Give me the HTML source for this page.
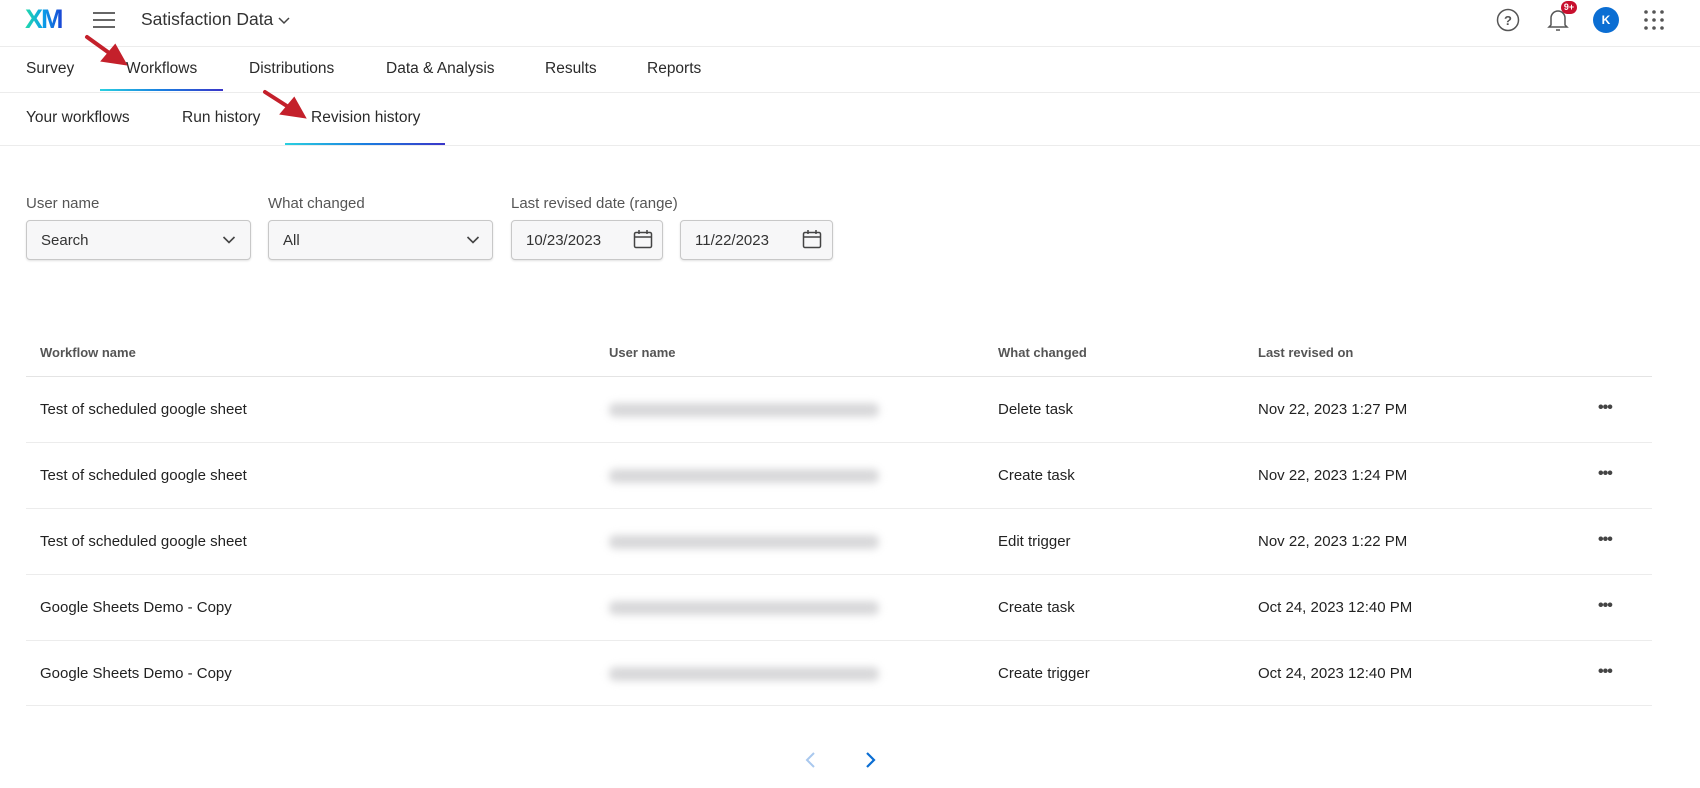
<!DOCTYPE html>
<html><head><style>
*{margin:0;padding:0;box-sizing:border-box}
body{width:1700px;height:788px;overflow:hidden;background:#fff;font-family:"Liberation Sans",sans-serif;color:#1d1d1f;position:relative}
.a{position:absolute;white-space:nowrap}
.hl{position:absolute;left:0;width:1700px;height:1px;background:#ececec}
.tab{position:absolute;font-size:15.5px;color:#2a2a2a;top:60px}
.sub{position:absolute;font-size:15.5px;color:#2a2a2a;top:109px}
.lbl{position:absolute;top:195px;font-size:15px;color:#555}
.box{position:absolute;top:220px;height:40px;border:1px solid #c8c8c8;border-radius:4px;background:#f7f7f8;box-shadow:0 1px 2px rgba(0,0,0,.12);font-size:15px;color:#333;padding:11px 14px}
.th{position:absolute;top:345px;font-size:13px;font-weight:bold;color:#555}
.td{position:absolute;font-size:15px;color:#222}
.blur{position:absolute;left:609px;width:270px;height:14px;background:#d8d8da;filter:blur(4px);border-radius:6px}
.dots{position:absolute;left:1598px;font-size:16px;font-weight:bold;color:#444;letter-spacing:-1px}
</style></head><body>
<!-- top bar -->
<div class="a" style="left:25px;top:4px;font-size:27px;font-weight:bold;letter-spacing:-2px;background:linear-gradient(90deg,#21dbaa,#0b9ee8,#1a44d4);-webkit-background-clip:text;color:transparent">XM</div>
<div class="a" style="left:93px;top:12px;width:22px;height:2px;background:#666;box-shadow:0 7px 0 #666,0 14px 0 #666"></div>
<div class="a" style="left:141px;top:9px;font-size:17.5px;color:#333">Satisfaction Data</div>
<svg class="a" style="left:277px;top:15px" width="14" height="10"><path d="M2 3l5 5 5-5" stroke="#444" stroke-width="1.5" fill="none"/></svg>
<svg class="a" style="left:1496px;top:8px" width="24" height="24"><circle cx="12" cy="12" r="10.5" stroke="#555" stroke-width="1.5" fill="none"/><text x="12" y="17" font-size="13" font-family="Liberation Sans" text-anchor="middle" fill="#555" font-weight="bold">?</text></svg>
<svg class="a" style="left:1545px;top:6px" width="26" height="26"><path d="M6 19V12a7 7 0 0 1 14 0v7l2 2H4z" stroke="#555" stroke-width="1.5" fill="none"/><path d="M11 24h4" stroke="#555" stroke-width="1.5"/></svg>
<div class="a" style="left:1561px;top:1px;width:16px;height:13px;border-radius:7px;background:#c8102e;color:#fff;font-size:9px;font-weight:bold;text-align:center;line-height:13px">9+</div>
<div class="a" style="left:1593px;top:7px;width:26px;height:26px;border-radius:50%;background:#0b6ed3;color:#fff;font-size:12px;font-weight:bold;text-align:center;line-height:26px">K</div>
<svg class="a" style="left:1643px;top:9px" width="22" height="22" fill="#555"><circle cx="3" cy="3" r="1.8"/><circle cx="11" cy="3" r="1.8"/><circle cx="19" cy="3" r="1.8"/><circle cx="3" cy="11" r="1.8"/><circle cx="11" cy="11" r="1.8"/><circle cx="19" cy="11" r="1.8"/><circle cx="3" cy="19" r="1.8"/><circle cx="11" cy="19" r="1.8"/><circle cx="19" cy="19" r="1.8"/></svg>
<div class="hl" style="top:46px"></div>
<!-- tabs -->
<div class="tab" style="left:26px">Survey</div>
<div class="tab" style="left:126px">Workflows</div>
<div class="tab" style="left:249px">Distributions</div>
<div class="tab" style="left:386px">Data &amp; Analysis</div>
<div class="tab" style="left:545px">Results</div>
<div class="tab" style="left:647px">Reports</div>
<div class="a" style="left:100px;top:89px;width:123px;height:2px;background:linear-gradient(90deg,#2ad0e0,#1a7ee0,#3a35c8)"></div>
<div class="hl" style="top:92px"></div>
<div class="sub" style="left:26px">Your workflows</div>
<div class="sub" style="left:182px">Run history</div>
<div class="sub" style="left:311px">Revision history</div>
<div class="a" style="left:285px;top:143px;width:160px;height:2px;background:linear-gradient(90deg,#2ad0e0,#1a7ee0,#3a35c8)"></div>
<div class="hl" style="top:145px"></div>
<!-- arrows -->
<svg class="a" style="left:0;top:0" width="400" height="130"><g stroke="#c4202b" stroke-width="4" fill="#c4202b" stroke-linecap="round"><path d="M87 37L112 55"/><path d="M124 63L104 60L115 47z"/><path d="M265 92L290 108"/><path d="M303 116L283 113L294 100z"/></g></svg>
<!-- filters -->
<div class="lbl" style="left:26px">User name</div>
<div class="lbl" style="left:268px">What changed</div>
<div class="lbl" style="left:511px">Last revised date (range)</div>
<div class="box" style="left:26px;width:225px">Search</div>
<div class="box" style="left:268px;width:225px">All</div>
<div class="box" style="left:511px;width:152px">10/23/2023</div>
<div class="box" style="left:680px;width:153px">11/22/2023</div>
<svg class="a" style="left:222px;top:235px" width="14" height="10"><path d="M1.5 2l5.5 5.5 5.5-5.5" stroke="#444" stroke-width="1.6" fill="none"/></svg>
<svg class="a" style="left:466px;top:235px" width="14" height="10"><path d="M1.5 2l5.5 5.5 5.5-5.5" stroke="#444" stroke-width="1.6" fill="none"/></svg>
<svg class="a" style="left:633px;top:229px" width="20" height="20"><rect x="1.5" y="3.5" width="17" height="15" rx="1.5" stroke="#444" stroke-width="1.5" fill="none"/><path d="M1.5 8h17M6 1v4M14 1v4" stroke="#444" stroke-width="1.5"/></svg>
<svg class="a" style="left:802px;top:229px" width="20" height="20"><rect x="1.5" y="3.5" width="17" height="15" rx="1.5" stroke="#444" stroke-width="1.5" fill="none"/><path d="M1.5 8h17M6 1v4M14 1v4" stroke="#444" stroke-width="1.5"/></svg>
<!-- table -->
<div class="th" style="left:40px">Workflow name</div>
<div class="th" style="left:609px">User name</div>
<div class="th" style="left:998px">What changed</div>
<div class="th" style="left:1258px">Last revised on</div>
<div class="a" style="left:26px;top:376px;width:1626px;height:1px;background:#e4e4e4"></div>

<div class="td" style="left:40px;top:401px">Test of scheduled google sheet</div><div class="blur" style="top:403px"></div><div class="td" style="left:998px;top:401px">Delete task</div><div class="td" style="left:1258px;top:401px">Nov 22, 2023 1:27 PM</div><div class="dots" style="top:399px">•••</div>
<div class="a" style="left:26px;top:442px;width:1626px;height:1px;background:#ececec"></div>
<div class="td" style="left:40px;top:467px">Test of scheduled google sheet</div><div class="blur" style="top:469px"></div><div class="td" style="left:998px;top:467px">Create task</div><div class="td" style="left:1258px;top:467px">Nov 22, 2023 1:24 PM</div><div class="dots" style="top:465px">•••</div>
<div class="a" style="left:26px;top:508px;width:1626px;height:1px;background:#ececec"></div>
<div class="td" style="left:40px;top:533px">Test of scheduled google sheet</div><div class="blur" style="top:535px"></div><div class="td" style="left:998px;top:533px">Edit trigger</div><div class="td" style="left:1258px;top:533px">Nov 22, 2023 1:22 PM</div><div class="dots" style="top:531px">•••</div>
<div class="a" style="left:26px;top:574px;width:1626px;height:1px;background:#ececec"></div>
<div class="td" style="left:40px;top:599px">Google Sheets Demo - Copy</div><div class="blur" style="top:601px"></div><div class="td" style="left:998px;top:599px">Create task</div><div class="td" style="left:1258px;top:599px">Oct 24, 2023 12:40 PM</div><div class="dots" style="top:597px">•••</div>
<div class="a" style="left:26px;top:640px;width:1626px;height:1px;background:#ececec"></div>
<div class="td" style="left:40px;top:665px">Google Sheets Demo - Copy</div><div class="blur" style="top:667px"></div><div class="td" style="left:998px;top:665px">Create trigger</div><div class="td" style="left:1258px;top:665px">Oct 24, 2023 12:40 PM</div><div class="dots" style="top:663px">•••</div>
<div class="a" style="left:26px;top:705px;width:1626px;height:1px;background:#ececec"></div>
<!-- pagination -->
<svg class="a" style="left:804px;top:751px" width="14" height="18"><path d="M10 2L3 9l7 7" stroke="#a9c8ee" stroke-width="2" fill="none"/></svg>
<svg class="a" style="left:863px;top:751px" width="14" height="18"><path d="M4 2l7 7-7 7" stroke="#0b6ed3" stroke-width="2.2" fill="none"/></svg>
</body></html>
